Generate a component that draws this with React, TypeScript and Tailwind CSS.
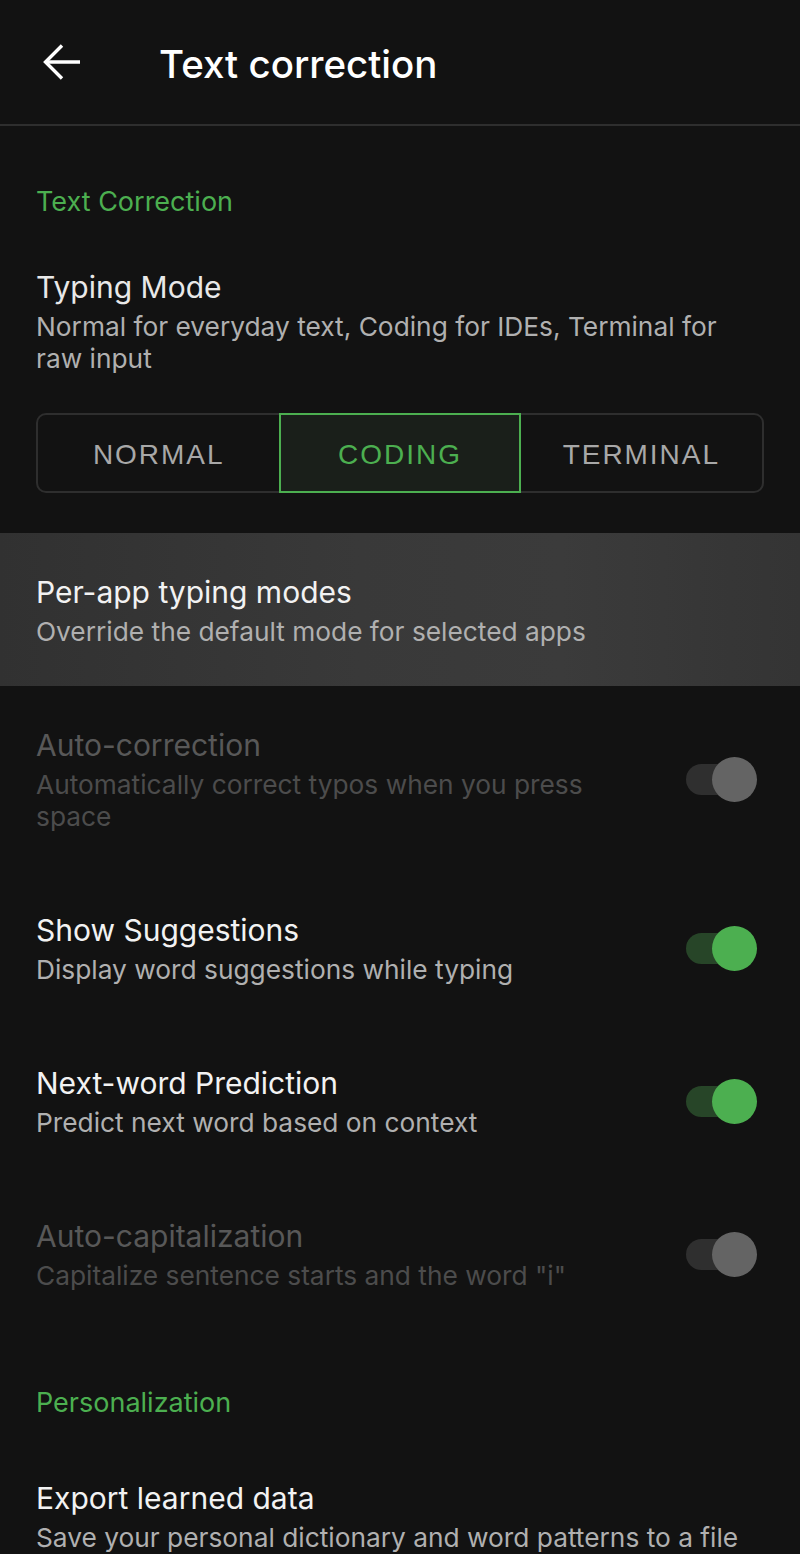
import React from "react";

function Toggle({ on, disabled }: { on: boolean; disabled?: boolean }) {
  const track = disabled ? "bg-[#2f2f2f]" : on ? "bg-[#274528]" : "bg-[#333333]";
  const thumb = disabled ? "bg-[#646464]" : on ? "bg-[#4caf50]" : "bg-[#9e9e9e]";
  return (
    <div className="relative w-[71px] h-[45px] shrink-0 mr-[7px]">
      <div className={`absolute left-0 top-[7px] w-[66px] h-[31px] rounded-full ${track}`} />
      <div className={`absolute right-0 top-0 w-[45px] h-[45px] rounded-full ${thumb}`} />
    </div>
  );
}

function SectionHeader({ children, first }: { children: React.ReactNode; first?: boolean }) {
  return (
    <div className={`px-[36px] ${first ? "pt-[60px]" : "pt-[57px]"} pb-[20px]`}>
      <div className="text-[27px] leading-[32px] text-[#4caf50]">{children}</div>
    </div>
  );
}

function Row({
  title,
  desc,
  toggle,
  disabled,
  highlight,
}: {
  title: string;
  desc: string;
  toggle?: boolean;
  disabled?: boolean;
  highlight?: boolean;
}) {
  return (
    <div
      className={`flex items-center justify-between px-[36px] pt-[40px] pb-[38px] ${
        highlight ? "bg-[linear-gradient(90deg,#313131_0%,#393939_45%,#3b3b3b_70%,#343434_100%)]" : ""
      }`}
    >
      <div className={toggle !== undefined ? "w-[610px]" : "flex-1"}>
        <div
          className={`text-[30px] leading-[38px] ${disabled ? "text-[#585858]" : "text-[#f2f2f2]"}`}
        >
          {title}
        </div>
        <div
          className={`mt-[5px] text-[26.3px] leading-[32px] ${disabled ? "text-[#4c4c4c]" : "text-[#b0b0b0]"}`}
        >
          {desc}
        </div>
      </div>
      {toggle !== undefined && <Toggle on={toggle} disabled={disabled} />}
    </div>
  );
}

export default function App() {
  return (
    <div
      className="w-[800px] min-h-[1554px] bg-[#121212] overflow-hidden"
      style={{ fontFamily: "Inter, 'Noto Sans', sans-serif" }}
    >
      {/* Top bar */}
      <div className="flex items-center h-[124px] px-[36px] border-b-2 border-[#2e2e2e] box-content">
        <svg width="52" height="52" viewBox="0 0 52 52" className="shrink-0">
          <path d="M44 26H11" stroke="#ffffff" strokeWidth="3.4" fill="none" />
          <path d="M26 9.5L9.5 26L26 42.5" stroke="#ffffff" strokeWidth="3.4" fill="none" />
        </svg>
        <div className="ml-[71px] mt-[4px] text-[38.5px] leading-[48px] font-medium text-white">
          Text correction
        </div>
      </div>

      <SectionHeader first>Text Correction</SectionHeader>

      {/* Typing mode */}
      <div className="px-[36px] pt-[30px]">
        <div className="text-[30px] leading-[38px] text-[#e8e8e8]">Typing Mode</div>
        <div className="mt-[5px] max-w-[700px] text-[26.3px] leading-[32px] text-[#b0b0b0]">
          Normal for everyday text, Coding for IDEs, Terminal for raw input
        </div>
      </div>

      <div className="mx-[36px] mt-[38px] h-[80px] border-2 border-[#2e2e2e] rounded-[10px] grid grid-cols-3">
        <div
          className="flex items-center justify-center pt-[3px] text-[28px] font-medium tracking-[0.07em] text-[#a8a8a8]"
          style={{ fontFamily: "'Liberation Sans', Arial, sans-serif" }}
        >
          NORMAL
        </div>
        <div
          className="-my-[2px] flex items-center justify-center pt-[3px] border-2 border-[#4caf50] bg-[#1a1f1a] text-[28px] font-medium tracking-[0.07em] text-[#4caf50]"
          style={{ fontFamily: "'Liberation Sans', Arial, sans-serif" }}
        >
          CODING
        </div>
        <div
          className="flex items-center justify-center pt-[3px] text-[28px] font-medium tracking-[0.07em] text-[#a8a8a8]"
          style={{ fontFamily: "'Liberation Sans', Arial, sans-serif" }}
        >
          TERMINAL
        </div>
      </div>

      <div className="mt-[40px]">
        <Row title="Per-app typing modes" desc="Override the default mode for selected apps" highlight />
        <Row
          title="Auto-correction"
          desc="Automatically correct typos when you press space"
          toggle={true}
          disabled
        />
        <Row title="Show Suggestions" desc="Display word suggestions while typing" toggle={true} />
        <Row title="Next-word Prediction" desc="Predict next word based on context" toggle={true} />
        <Row
          title="Auto-capitalization"
          desc={'Capitalize sentence starts and the word "i"'}
          toggle={true}
          disabled
        />
      </div>

      <SectionHeader>Personalization</SectionHeader>
      <Row title="Export learned data" desc="Save your personal dictionary and word patterns to a file" />
    </div>
  );
}
